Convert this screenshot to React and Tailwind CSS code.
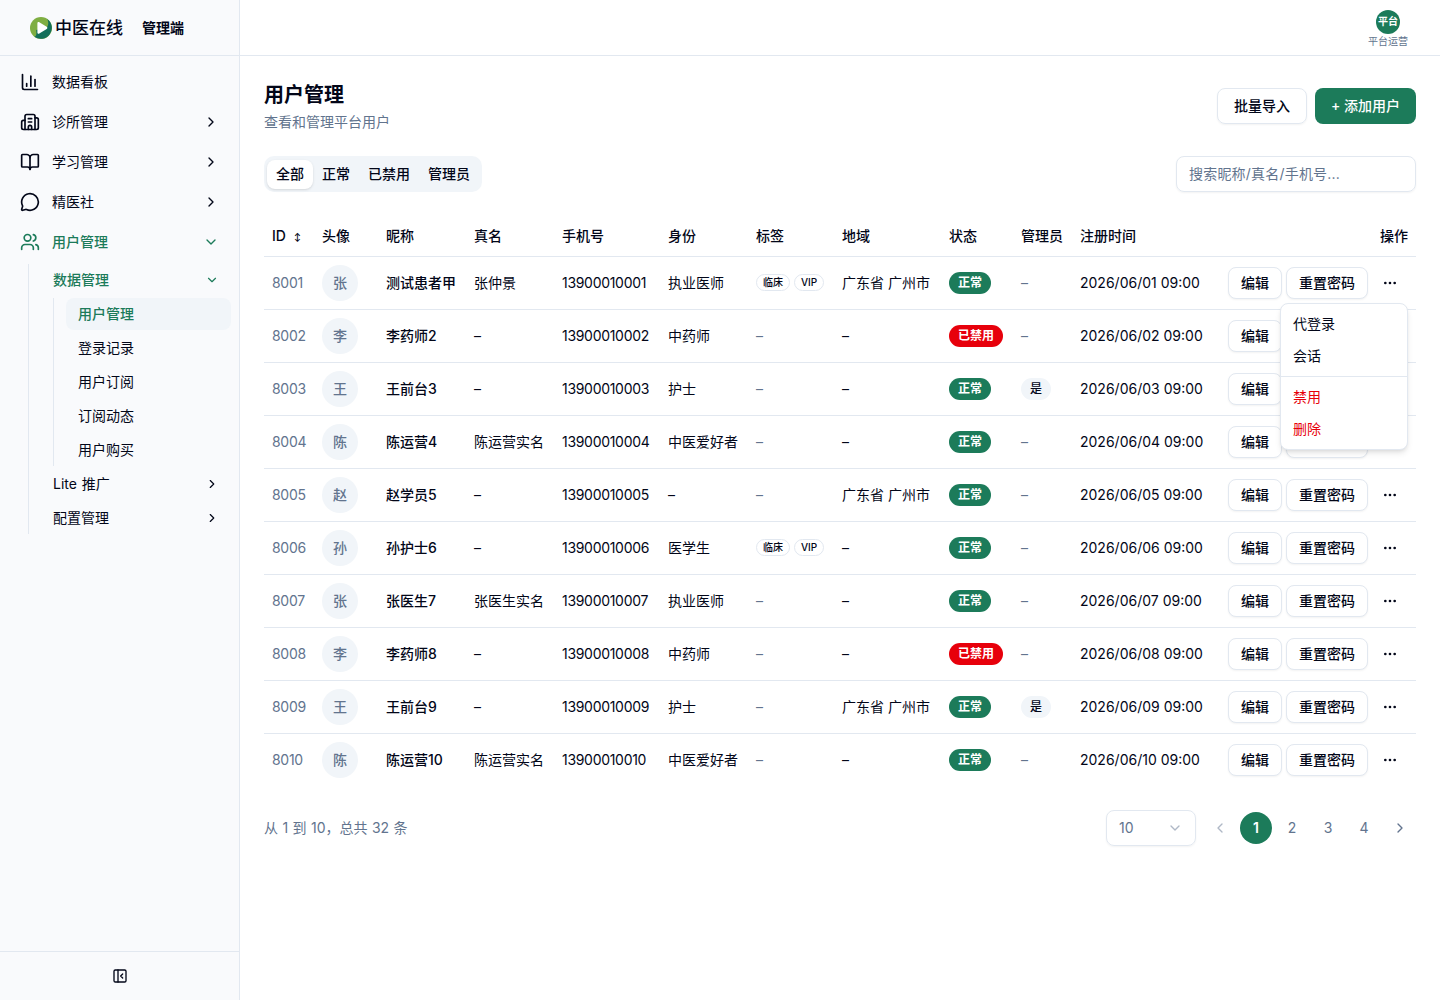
import {
  BookOpen,
  Building2,
  ChartColumn,
  ChevronDown,
  ChevronLeft,
  ChevronRight,
  Ellipsis,
  MessageCircle,
  PanelLeftClose,
  Users,
} from "lucide-react";

const NAV = [
  { label: "数据看板", icon: ChartColumn },
  { label: "诊所管理", icon: Building2, more: true },
  { label: "学习管理", icon: BookOpen, more: true },
  { label: "精医社", icon: MessageCircle, more: true },
];

const TABS = ["全部", "正常", "已禁用", "管理员"];

const COLUMNS = [
  { label: "ID", width: "w-[50px]" },
  { label: "头像", width: "w-16" },
  { label: "昵称", width: "w-[88px]" },
  { label: "真名", width: "w-[88px]" },
  { label: "手机号", width: "w-[106px]" },
  { label: "身份", width: "w-[88px]" },
  { label: "标签", width: "w-[86px]" },
  { label: "地域", width: "w-[107px]" },
  { label: "状态", width: "w-[72px]" },
  { label: "管理员", width: "w-[59px]" },
  { label: "注册时间", width: "w-[140px]" },
  { label: "操作", width: "w-[204px]" },
];

const USERS = [
  { id: 8001, nick: "测试患者甲", avatar: "张", real: "张仲景", role: "执业医师", tags: ["临床", "VIP"], region: "广东省 广州市" },
  { id: 8002, nick: "李药师2", role: "中药师", banned: true },
  { id: 8003, nick: "王前台3", role: "护士", admin: true },
  { id: 8004, nick: "陈运营4", real: "陈运营实名", role: "中医爱好者" },
  { id: 8005, nick: "赵学员5", region: "广东省 广州市" },
  { id: 8006, nick: "孙护士6", role: "医学生", tags: ["临床", "VIP"] },
  { id: 8007, nick: "张医生7", real: "张医生实名", role: "执业医师" },
  { id: 8008, nick: "李药师8", role: "中药师", banned: true },
  { id: 8009, nick: "王前台9", role: "护士", region: "广东省 广州市", admin: true },
  { id: 8010, nick: "陈运营10", real: "陈运营实名", role: "中医爱好者" },
];

function Logo() {
  return (
    <svg className="size-[22px]" viewBox="0 0 22 22" fill="none">
      <circle cx="11" cy="11" r="11" fill="#7fae42" />
      <path d="M17.2 1.9A11 11 0 1 1 4.4 19.8C7 19 6.4 16 6.2 13L16.5 11C18.6 8 18.9 5 17.2 1.9Z" fill="#136f5a" />
      <path d="M7.4 6.4c0-1.2 1-1.6 1.9-1.1l7.4 4.5c.9.6.9 1.7 0 2.3l-7.4 4.5c-.9.5-1.9 0-1.9-1.1Z" fill="#fff" />
    </svg>
  );
}

function Dash() {
  return <span className="text-[#62748e]">–</span>;
}

function Sidebar() {
  return (
    <aside className="flex w-60 shrink-0 flex-col border-r border-slate-200 bg-[#f9fafc]">
      <div className="flex h-14 shrink-0 items-center border-b border-slate-200 pl-[30px]">
        <Logo />
        <span className="ml-[3px] pt-0.5 text-[17px] font-medium">中医在线</span>
        <span className="ml-[19px] text-sm font-semibold">管理端</span>
      </div>

      <nav className="flex-1 px-2 pt-1.5">
        {NAV.map(({ label, icon: Icon, more }) => (
          <div key={label} className="flex h-10 items-center px-3">
            <Icon className="size-5" />
            <span className="ml-3 flex-1">{label}</span>
            {more && <ChevronRight className="size-4" />}
          </div>
        ))}
        <div className="flex h-10 items-center px-3 font-medium text-[#1c7b5a]">
          <Users className="size-5" />
          <span className="ml-3 flex-1">用户管理</span>
          <ChevronDown className="size-4" />
        </div>

        <div className="mt-0.5 ml-5 flex flex-col gap-0.5 border-l border-slate-200 pl-3">
          <div className="flex h-8 items-center px-3 font-medium text-[#1c7b5a]">
            <span className="flex-1">数据管理</span>
            <ChevronDown className="size-3.5" />
          </div>
          <div className="ml-3 flex flex-col gap-0.5 border-l border-slate-200 pl-3">
            <div className="flex h-8 items-center rounded-lg bg-slate-100 pl-3 font-medium text-[#1c7b5a]">用户管理</div>
            {["登录记录", "用户订阅", "订阅动态", "用户购买"].map((label) => (
              <div key={label} className="flex h-8 items-center pl-3">
                {label}
              </div>
            ))}
          </div>
          {["Lite 推广", "配置管理"].map((label) => (
            <div key={label} className="flex h-8 items-center px-3">
              <span className="flex-1 [word-spacing:1px]">{label}</span>
              <ChevronRight className="size-3.5" />
            </div>
          ))}
        </div>
      </nav>

      <div className="flex h-[49px] shrink-0 items-center justify-center border-t border-slate-200">
        <PanelLeftClose className="size-4" />
      </div>
    </aside>
  );
}

function OutlineButton({ children }) {
  return (
    <button className="h-8 rounded-lg border border-slate-200 bg-white px-3 font-medium shadow-xs">{children}</button>
  );
}

function ActionMenu() {
  return (
    <div className="absolute top-[46px] right-2 z-10 w-32 rounded-lg border border-slate-200 bg-white py-1 text-left shadow-md">
      <div className="flex h-8 items-center px-3">代登录</div>
      <div className="flex h-8 items-center px-3">会话</div>
      <div className="my-1 h-px bg-slate-200" />
      <div className="flex h-8 items-center px-3 text-[#e7000b]">禁用</div>
      <div className="flex h-8 items-center px-3 text-[#e7000b]">删除</div>
    </div>
  );
}

function UserRow({ user, menuOpen }) {
  const n = String(user.id - 8000).padStart(2, "0");
  return (
    <tr className="h-[53px] border-b border-slate-200 last:border-0">
      <td className="px-2 tracking-[-0.3px] text-[#62748e]">{user.id}</td>
      <td className="px-2">
        <div className="flex size-9 items-center justify-center rounded-full bg-slate-100 font-medium text-[#62748e]">
          {user.avatar || user.nick[0]}
        </div>
      </td>
      <td className="px-2 font-medium">{user.nick}</td>
      <td className="px-2">{user.real || "–"}</td>
      <td className="px-2 tracking-[-0.3px]">139000100{n}</td>
      <td className="px-2">{user.role || "–"}</td>
      <td className="px-2">
        {user.tags ? (
          <div className="flex gap-1">
            {user.tags.map((t) => (
              <span key={t} className="flex h-[17px] items-center rounded-full border border-slate-200 px-1.5 text-[10px] font-medium">
                {t}
              </span>
            ))}
          </div>
        ) : (
          <Dash />
        )}
      </td>
      <td className="px-2">{user.region || "–"}</td>
      <td className="px-2">
        <span
          className={`inline-flex h-[22px] items-center rounded-full px-[9px] align-middle text-xs font-semibold text-white ${
            user.banned ? "bg-[#e7000b]" : "bg-[#1c7b5a]"
          }`}
        >
          {user.banned ? "已禁用" : "正常"}
        </span>
      </td>
      <td className="px-2">
        {user.admin ? (
          <span className="inline-flex h-[22px] items-center rounded-full bg-slate-100 px-[9px] align-middle text-xs font-medium">
            是
          </span>
        ) : (
          <Dash />
        )}
      </td>
      <td className="px-2">2026/06/{n} 09:00</td>
      <td className="relative px-2">
        <div className="flex items-center justify-end gap-1">
          <OutlineButton>编辑</OutlineButton>
          <OutlineButton>重置密码</OutlineButton>
          <button className="flex h-8 w-9 items-center justify-center">
            <Ellipsis className="size-4" />
          </button>
        </div>
        {menuOpen && <ActionMenu />}
      </td>
    </tr>
  );
}

function Pagination() {
  return (
    <div className="mt-6 flex items-center justify-between text-[#62748e]">
      <span className="[word-spacing:0.5px]">从 1 到 10，总共 32 条</span>
      <div className="flex items-center gap-1">
        <div className="mr-1 flex h-9 w-[90px] items-center justify-between rounded-lg border border-slate-200 px-3 shadow-xs">
          10
          <ChevronDown className="size-4 opacity-50" />
        </div>
        <span className="flex size-8 items-center justify-center opacity-50">
          <ChevronLeft className="size-4" />
        </span>
        {[1, 2, 3, 4].map((p) => (
          <span
            key={p}
            className={`flex size-8 items-center justify-center rounded-full ${
              p === 1 ? "bg-[#1c7b5a] font-semibold text-white" : ""
            }`}
          >
            {p}
          </span>
        ))}
        <span className="flex size-8 items-center justify-center">
          <ChevronRight className="size-4" />
        </span>
      </div>
    </div>
  );
}

export default function App() {
  return (
    <div className="flex h-screen overflow-hidden bg-white font-[Inter,'Noto_Sans_CJK_SC',sans-serif] text-sm text-[#020618]">
      <Sidebar />
      <div className="flex min-w-0 flex-1 flex-col">
        <header className="flex h-14 shrink-0 items-center justify-end border-b border-slate-200 pr-8">
          <div className="flex flex-col items-center pt-px">
            <div className="flex size-6 items-center justify-center rounded-full bg-[#1c7b5a] text-[10px] font-semibold text-white">
              平台
            </div>
            <span className="mt-0.5 text-[10px] leading-[11px] text-[#62748e]">平台运营</span>
          </div>
        </header>

        <main className="px-6 pt-6">
          <div className="flex items-center justify-between">
            <div>
              <h1 className="pt-px text-xl leading-7 font-semibold">用户管理</h1>
              <p className="mt-[3px] leading-5 text-[#62748e]">查看和管理平台用户</p>
            </div>
            <div className="flex gap-2">
              <button className="h-9 rounded-lg border border-slate-200 px-4 font-medium shadow-xs">批量导入</button>
              <button className="h-9 w-[101px] rounded-lg bg-[#1c7b5a] font-medium text-white">+ 添加用户</button>
            </div>
          </div>

          <div className="mt-6 flex items-center justify-between">
            <div className="flex h-9 items-center rounded-[10px] bg-slate-100 p-[3px]">
              {TABS.map((tab, i) => (
                <span
                  key={tab}
                  className={`flex h-[29px] items-center rounded-lg px-[9px] font-medium ${i === 0 ? "bg-white shadow-sm" : ""}`}
                >
                  {tab}
                </span>
              ))}
            </div>
            <input
              className="h-9 w-60 rounded-lg border border-slate-200 px-3 pb-0.5 tracking-[0.2px] shadow-xs outline-none placeholder:text-[#62748e]"
              placeholder="搜索昵称/真名/手机号..."
            />
          </div>

          <table className="mt-6 w-full table-fixed whitespace-nowrap">
            <thead>
              <tr className="h-10 border-b border-slate-200">
                {COLUMNS.map(({ label, width }) => (
                  <th key={label} className={`px-2 font-medium ${width} ${label === "操作" ? "text-right" : "text-left"}`}>
                    {label}
                    {label === "ID" && <span className="ml-2 inline-block align-middle text-[8px] leading-none font-bold">↕</span>}
                  </th>
                ))}
              </tr>
            </thead>
            <tbody>
              {USERS.map((user, i) => (
                <UserRow key={user.id} user={user} menuOpen={i === 0} />
              ))}
            </tbody>
          </table>

          <Pagination />
        </main>
      </div>
    </div>
  );
}
